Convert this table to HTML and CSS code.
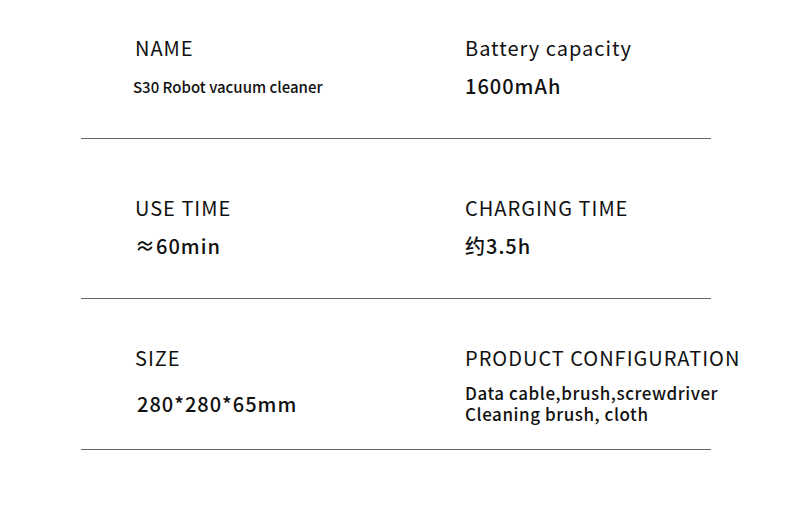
FILE: index.html
```html
<!DOCTYPE html>
<html>
<head>
<meta charset="utf-8">
<link rel="stylesheet" href="styles.css">
</head>
<body>
<div class="specs">
  <div class="row row-1">
    <div class="cell">
      <div class="label">NAME</div>
      <div class="value value-small">S30 Robot vacuum cleaner</div>
    </div>
    <div class="cell">
      <div class="label">Battery capacity</div>
      <div class="value">1600mAh</div>
    </div>
  </div>
  <div class="row row-2">
    <div class="cell">
      <div class="label">USE TIME</div>
      <div class="value">≈60min</div>
    </div>
    <div class="cell">
      <div class="label">CHARGING TIME</div>
      <div class="value">约3.5h</div>
    </div>
  </div>
  <div class="row row-3">
    <div class="cell">
      <div class="label">SIZE</div>
      <div class="value value-size">280*280*65mm</div>
    </div>
    <div class="cell">
      <div class="label">PRODUCT CONFIGURATION</div>
      <div class="value value-multi">
        <div class="line">Data cable,brush,screwdriver</div>
        <div class="line">Cleaning brush, cloth</div>
      </div>
    </div>
  </div>
</div>
</body>
</html>
```
FILE: styles.css
```css
html, body {
  margin: 0;
  padding: 0;
  background: #ffffff;
}
body {
  width: 790px;
  height: 512px;
  overflow: hidden;
  font-family: "Noto Sans CJK SC", "Noto Sans", sans-serif;
  color: #111111;
}
.specs {
  margin-left: 81px;
  width: 630px;
}
.row {
  display: grid;
  grid-template-columns: 384px 246px;
  border-bottom: 1px solid #666666;
  box-sizing: border-box;
}
.row-1 { height: 139px; padding-top: 34px; }
.row-2 { height: 160px; padding-top: 55px; }
.row-3 { height: 151px; padding-top: 45px; }
.cell:first-child { padding-left: 54px; }
.cell { white-space: nowrap; }
.label {
  font-size: 20px;
  font-weight: 400;
  letter-spacing: 1px;
  line-height: 28px;
}
.value {
  margin-top: 10px;
  font-size: 20px;
  font-weight: 500;
  letter-spacing: 1px;
  line-height: 28px;
}
.value-small {
  font-size: 15px;
  letter-spacing: 0;
  margin-left: -2px;
  margin-top: 11px;
}
.value-size {
  margin-top: 18px;
  margin-left: 2px;
}
.value-multi {
  font-size: 17px;
  letter-spacing: 0.55px;
  line-height: 21px;
}
.line {
  height: 21px;
  line-height: 21px;
}
```
